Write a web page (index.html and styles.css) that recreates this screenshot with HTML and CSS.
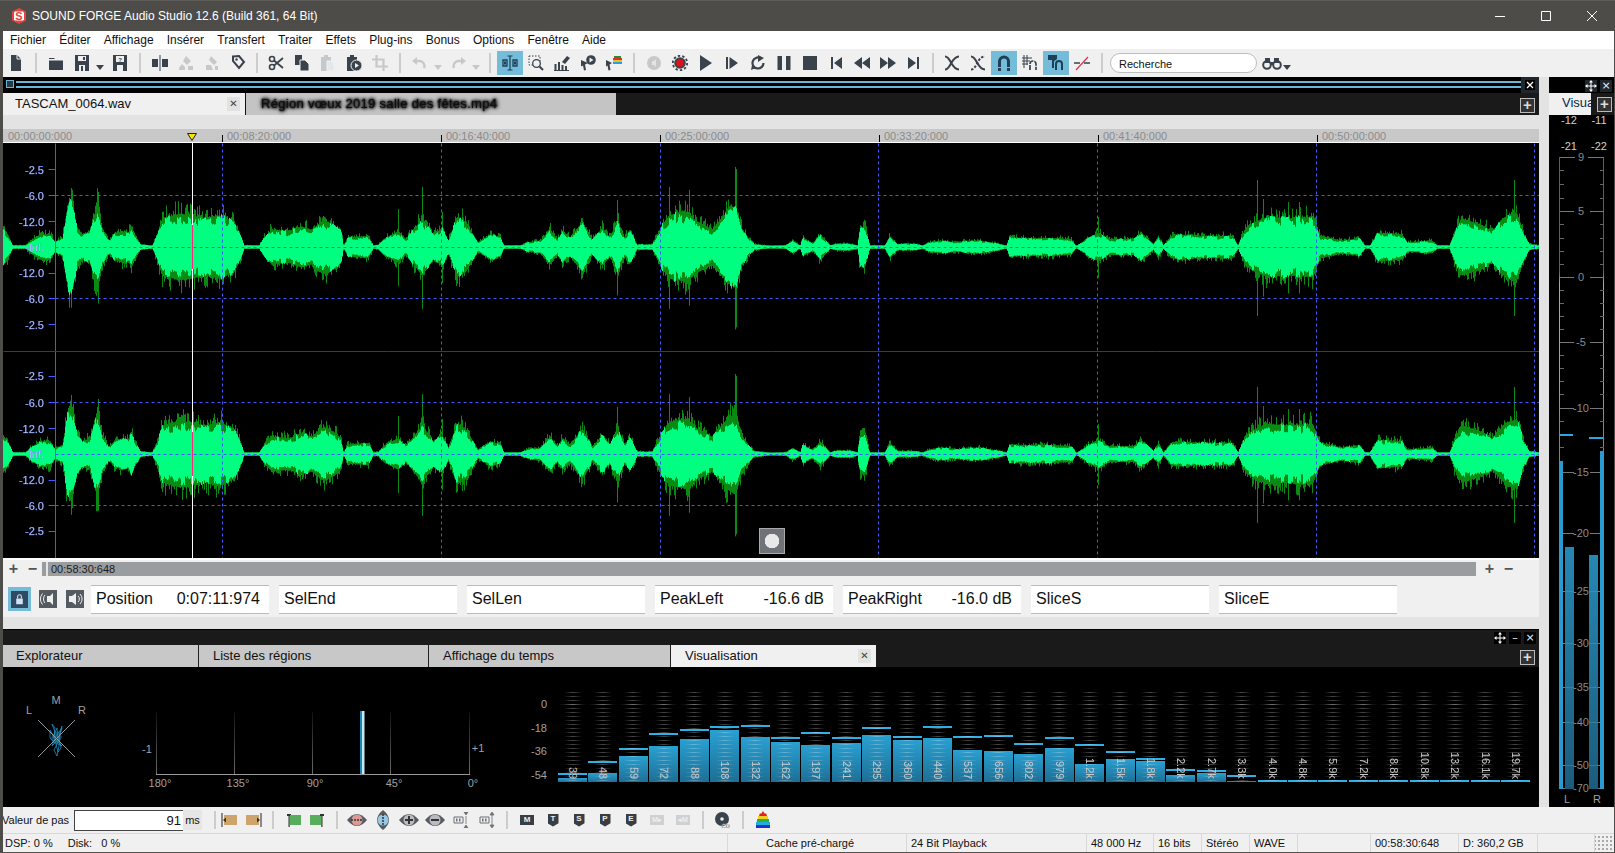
FILE: index.html
```html
<!DOCTYPE html>
<html lang="fr">
<head>
<meta charset="utf-8">
<title>SOUND FORGE Audio Studio 12.6</title>
<link rel="stylesheet" href="styles.css">
</head>
<body>
<svg class="sprite" xmlns="http://www.w3.org/2000/svg">
  <symbol id="new" viewBox="0 0 16 16"><path d="M3 0h6l4 4v12H3z" fill="currentColor"/><path d="M9 0v4h4" fill="none" stroke="#f0f0f0"/></symbol>
  <symbol id="open" viewBox="0 0 16 16"><path d="M1 3h5l1 1H1zM1 5.500h14V15H1z" fill="currentColor"/></symbol>
  <symbol id="save" viewBox="0 0 16 16"><path fill-rule="evenodd" d="M1 0h14v16H1zM4 1v5h8V1zM5 10v6h6v-6z" fill="currentColor"/><path d="M9 2h2v3H9zM7 11h2v5H7z" fill="currentColor"/></symbol>
  <symbol id="saveas" viewBox="0 0 16 16"><path fill-rule="evenodd" d="M1 0h14v16H1zM4 1v6h8V1zM5 10v6h6v-6z" fill="currentColor"/><text x="8" y="6.500" class="t6" text-anchor="middle" fill="currentColor">?</text></symbol>
  <symbol id="split" viewBox="0 0 16 16"><path d="M0 4h6v8H0zM10 4h6v8h-6z" fill="currentColor"/><path d="M8 0v16" stroke="currentColor"/></symbol>
  <symbol id="mixa" viewBox="0 0 16 16"><path d="M8 1l5 5-4 4-4-4zM1 13l3-4 3 3v3H1zM10 11h5v4h-5z" fill="currentColor"/></symbol>
  <symbol id="mixb" viewBox="0 0 16 16"><path d="M7 1l6 6-3 3-5-5zM2 10h5l2 5H2zM11 11h3v4h-3z" fill="currentColor"/></symbol>
  <symbol id="tag" viewBox="0 0 16 16"><path d="M3 1.500l6-.5 5 6-5 6-6-7z" fill="none" stroke="currentColor" stroke-width="2"/><circle cx="6.500" cy="4.500" r="1.200" fill="currentColor"/></symbol>
  <symbol id="cut" viewBox="0 0 16 16"><circle cx="4" cy="4" r="2.500" fill="none" stroke="currentColor" stroke-width="1.600"/><circle cx="4" cy="12" r="2.500" fill="none" stroke="currentColor" stroke-width="1.600"/><path d="M6 5.500L15 13M6 10.500L15 3" stroke="currentColor" stroke-width="1.800"/></symbol>
  <symbol id="copy" viewBox="0 0 16 16"><path d="M1 0h7v10H1z" fill="currentColor"/><path d="M6 5h5l4 4v7H6z" fill="currentColor" stroke="#f0f0f0"/></symbol>
  <symbol id="paste" viewBox="0 0 16 16"><path d="M1 2h10v14H1z" fill="currentColor"/><path d="M4 0h4v3H4z" fill="currentColor"/><path d="M7 6h4l3 3v7H7z" fill="#e6e7e8" stroke="#f0f0f0"/></symbol>
  <symbol id="pastep" viewBox="0 0 16 16"><path d="M1 2h10v14H1z" fill="currentColor"/><path d="M4 0h4v3H4z" fill="currentColor"/><circle cx="10.500" cy="10.500" r="5.500" fill="currentColor" stroke="#f0f0f0"/><path d="M9 8l4 2.500L9 13z" fill="#f0f0f0"/></symbol>
  <symbol id="crop" viewBox="0 0 16 16"><path d="M4.500 0v11.500H16M0 4.500h11.500V16" fill="none" stroke="currentColor" stroke-width="2.200"/></symbol>
  <symbol id="undo" viewBox="0 0 16 16"><path d="M0 6l5-4v8z" fill="currentColor"/><path d="M4 6h4a5 5 0 0 1 4 7" fill="none" stroke="currentColor" stroke-width="2.400"/></symbol>
  <symbol id="redo" viewBox="0 0 16 16"><path d="M16 6l-5-4v8z" fill="currentColor"/><path d="M12 6H8a5 5 0 0 0-4 7" fill="none" stroke="currentColor" stroke-width="2.400"/></symbol>
  <symbol id="ibeam" viewBox="0 0 16 16"><path d="M1 5h4v6H1zM11 5h4v6h-4z" fill="none" stroke="currentColor" stroke-width="1.300"/><path d="M8 1v14M5.500 1h5M5.500 15h5" stroke="currentColor" stroke-width="1.200"/><path d="M2 6.500h2v3H2zM12 6.500h2v3h-2z" fill="currentColor"/></symbol>
  <symbol id="zoomt" viewBox="0 0 16 16"><path d="M1 1h11v9H1z" fill="none" stroke="currentColor" stroke-dasharray="1.500 1.500"/><circle cx="8.500" cy="8.500" r="3.800" fill="#f0f0f0" stroke="currentColor" stroke-width="1.300"/><path d="M11.500 11.500l3.500 3.500" stroke="currentColor" stroke-width="2"/></symbol>
  <symbol id="pen" viewBox="0 0 16 16"><path d="M8 7l5-6 3 2-5 6z" fill="currentColor"/><path d="M1.500 9v6M5 7v8M8.500 10v5M12 11v4" stroke="currentColor" stroke-width="2"/><path d="M0 15.500h15" stroke="currentColor"/></symbol>
  <symbol id="curp" viewBox="0 0 16 16"><path d="M1 5l7 3-3 1.500 1 5.500-2 .5-1-5-2 1z" fill="currentColor"/><circle cx="11" cy="5" r="4.800" fill="currentColor"/><path d="M9.500 2.500l4 2.500-4 2.500z" fill="#f0f0f0"/></symbol>
  <symbol id="curc" viewBox="0 0 16 16"><path d="M0 5l6 3-2.500 1.500 1 5.500-2 .5-1-5-1.500 1z" fill="currentColor"/><path d="M7 3h9v2H7z" fill="#e52b2b"/><path d="M8 1h7v2H8z" fill="#2c8b3b"/><path d="M7 5h9v2H7z" fill="#f0c020"/><path d="M7 7h9v2H7z" fill="#28a0e0"/></symbol>
  <symbol id="circ" viewBox="0 0 16 16"><circle cx="8" cy="8" r="7" fill="currentColor"/><path d="M6 6h2l2-2v8l-2-2H6z" fill="#e4e4e4"/></symbol>
  <symbol id="rec" viewBox="0 0 16 16"><circle cx="8" cy="8" r="5.800" fill="currentColor"/><circle cx="8" cy="8" r="7.200" fill="none" stroke="currentColor" stroke-width="1.800" stroke-dasharray="2.400 2.100"/><circle cx="8" cy="8" r="3.800" fill="#e0101a"/></symbol>
  <symbol id="play" viewBox="0 0 16 16"><path d="M2 0l12 8-12 8z" fill="currentColor"/></symbol>
  <symbol id="playn" viewBox="0 0 16 16"><path d="M2 2h2v12H2zM5.500 2l8.500 6-8.500 6z" fill="currentColor"/></symbol>
  <symbol id="loop" viewBox="0 0 16 16"><path d="M13.500 8a5.500 5.500 0 1 1-3-4.900" fill="none" stroke="currentColor" stroke-width="2.200"/><path d="M8 0l6 3-6 4zM1 15l1-5 4 3z" fill="currentColor"/></symbol>
  <symbol id="pause" viewBox="0 0 16 16"><path d="M1.500 1h4.500v14H1.500zM10 1h4.500v14H10z" fill="currentColor"/></symbol>
  <symbol id="stop" viewBox="0 0 16 16"><path d="M1 1h14v14H1z" fill="currentColor"/></symbol>
  <symbol id="prev" viewBox="0 0 16 16"><path d="M3 2h2v12H3zM14 2v12L6 8z" fill="currentColor"/></symbol>
  <symbol id="rew" viewBox="0 0 16 16"><path d="M8 2v12L0 8zM16 2v12L8 8z" fill="currentColor"/></symbol>
  <symbol id="ffw" viewBox="0 0 16 16"><path d="M0 2v12l8-6zM8 2v12l8-6z" fill="currentColor"/></symbol>
  <symbol id="next" viewBox="0 0 16 16"><path d="M11 2h2v12h-2zM2 2v12l8-6z" fill="currentColor"/></symbol>
  <symbol id="xf" viewBox="0 0 16 16"><path d="M1 1.500c6 0 6 13 14 13M1 14.500c6 0 6-13 14-13" fill="none" stroke="currentColor" stroke-width="2"/></symbol>
  <symbol id="xf2" viewBox="0 0 16 16"><path d="M1 1.500c6 0 6 13 14 13" fill="none" stroke="currentColor" stroke-width="2"/><path d="M1 14.500c6 0 6-13 14-13" fill="none" stroke="currentColor" stroke-width="2" stroke-dasharray="2.500 1.500"/></symbol>
  <symbol id="mag" viewBox="0 0 16 16"><path d="M3.500 12V6.500a4.500 4.500 0 0 1 9 0V12" fill="none" stroke="currentColor" stroke-width="3"/><path d="M2 13h3v3H2zM11 13h3v3h-3z" fill="currentColor"/></symbol>
  <symbol id="gmag" viewBox="0 0 16 16"><path d="M2 0v13M5 0v10M0 3h10M0 6h8M0 9h6" stroke="currentColor"/><path d="M8 15V9a3 3 0 0 1 6 0v6" fill="none" stroke="currentColor" stroke-width="1.700" stroke-dasharray="5 1"/></symbol>
  <symbol id="mmag" viewBox="0 0 16 16"><path d="M0 0h9v4l-4 3-1-2H0zM4 5h2v8H4z" fill="currentColor"/><path d="M8 15V9a3 3 0 0 1 6 0v6" fill="none" stroke="currentColor" stroke-width="2"/></symbol>
  <symbol id="fade" viewBox="0 0 16 16"><path d="M0 8h6M10 8h6" stroke="currentColor" stroke-width="1.600"/><path d="M2 15L14 2" stroke="#d8344a" stroke-width="1.200"/></symbol>
  <symbol id="binoc" viewBox="0 0 20 16"><circle cx="5" cy="10" r="3.800" fill="none" stroke="currentColor" stroke-width="2"/><circle cx="15" cy="10" r="3.800" fill="none" stroke="currentColor" stroke-width="2"/><path d="M3 3h5v5H3zM12 3h5v5h-5zM8 7h4v3H8z" fill="currentColor"/></symbol>
  <symbol id="tapel" viewBox="0 0 16 16"><path d="M1 1v14" stroke="#222"/><path d="M3 3h13v10H3z" fill="#cfa46c"/><path d="M2 8l3-2.500v5z" fill="#333"/></symbol>
  <symbol id="taper" viewBox="0 0 16 16"><path d="M15 1v14" stroke="#222"/><path d="M0 3h13v10H0z" fill="#cfa46c"/><path d="M14 8l-3-2.500v5z" fill="#333"/></symbol>
  <symbol id="grl" viewBox="0 0 16 16"><path d="M2 2h4v2H2zM3.500 2h1.200v13H3.500z" fill="#333"/><path d="M5 3h11v10H5z" fill="#58ad5d"/></symbol>
  <symbol id="grr" viewBox="0 0 16 16"><path d="M0 3h11v10H0z" fill="#58ad5d"/><path d="M10 2h4v2h-4zM11.300 2h1.200v13h-1.200z" fill="#333"/></symbol>
  <symbol id="lensr" viewBox="0 0 20 16"><path d="M0 8Q10-4 20 8 10 20 0 8z" fill="#555b61"/><circle cx="10" cy="8" r="5.500" fill="#dc9a96"/><path d="M4 8h12" stroke="#333" stroke-width="1.500" stroke-dasharray="2 1"/></symbol>
  <symbol id="lensb" viewBox="0 0 16 20"><path d="M8 0Q-4 10 8 20 20 10 8 0z" fill="#555b61"/><circle cx="8" cy="10" r="5.500" fill="#96c8e4"/><path d="M8 4v12" stroke="#333" stroke-width="1.500" stroke-dasharray="2 1"/></symbol>
  <symbol id="lensp" viewBox="0 0 20 16"><path d="M0 8Q10-4 20 8 10 20 0 8z" fill="#555b61"/><circle cx="10" cy="8" r="5.500" fill="#b8bcc0"/><path d="M6 8h8M10 4v8" stroke="#333" stroke-width="2"/></symbol>
  <symbol id="lensm" viewBox="0 0 20 16"><path d="M0 8Q10-4 20 8 10 20 0 8z" fill="#555b61"/><circle cx="10" cy="8" r="5.500" fill="#b8bcc0"/><path d="M6 8h8" stroke="#333" stroke-width="2"/></symbol>
  <symbol id="fith" viewBox="0 0 16 16"><path d="M1 5h9v6H1z" fill="none" stroke="currentColor"/><path d="M3 6.500h1.500v3H3zM6 6.500h1.500v3H6z" fill="currentColor"/><path d="M11 0l4 0-2 3zM11 16h4l-2-3zM13 4v8" fill="currentColor" stroke="currentColor" stroke-width=".8"/></symbol>
  <symbol id="fitv" viewBox="0 0 16 16"><path d="M1 5h9v6H1z" fill="none" stroke="currentColor"/><path d="M3 6.500h1.500v3H3zM6 6.500h1.500v3H6z" fill="currentColor"/><path d="M13 0l2 3h-4zM13 16l2-3h-4zM13 3v10" fill="currentColor" stroke="currentColor" stroke-width=".8"/></symbol>
  <symbol id="cd" viewBox="0 0 16 16"><circle cx="7" cy="7" r="7" fill="currentColor"/><circle cx="7" cy="7" r="1.800" fill="#f0f0f0"/><text x="10.500" y="15.500" class="t7" text-anchor="middle" fill="currentColor" stroke="#f0f0f0" stroke-width=".3">CD</text></symbol>
  <symbol id="rain" viewBox="0 0 16 18"><path d="M1 17h14v-3H1z" fill="#2030d0"/><path d="M1 14h14v-3H1z" fill="#20b0e0"/><path d="M2 11h12V8H2z" fill="#30b030"/><path d="M3 8h10V5H3z" fill="#f0d020"/><path d="M4 5h8l-1-3-1 1-2-3-2 3-1-1z" fill="#e02020"/></symbol>
  <symbol id="down" viewBox="0 0 10 10"><path d="M1 3h8L5 8z" fill="currentColor"/></symbol>
  <symbol id="move" viewBox="0 0 12 12"><path d="M6 0l2 2.500H4zM6 12l2-2.500H4zM0 6l2.500-2v4zM12 6L9.500 4v4z" fill="#fff"/><path d="M6 2v8M2 6h8" stroke="#fff"/></symbol>
</svg>

<div class="app">
  <header class="titlebar">
    <svg class="logo" viewBox="0 0 16 16"><path d="M8 0l7 3.500v9L8 16l-7-3.500v-9z" fill="#e2453f"/><path d="M4 3.500h8l1 1v7l-1 1H4l-1-1v-7z" fill="#fff"/><text x="8" y="12" class="logot" text-anchor="middle">S</text></svg>
    <span class="apptitle">SOUND FORGE Audio Studio 12.6 (Build 361, 64 Bit)</span>
    <div class="winbtns">
      <svg viewBox="0 0 46 31"><path d="M18 15.500h10" stroke="#fff"/></svg>
      <svg viewBox="0 0 46 31"><path d="M18.500 10.500h9v9h-9z" fill="none" stroke="#fff"/></svg>
      <svg viewBox="0 0 46 31"><path d="M18 10l10 10M28 10L18 20" stroke="#fff"/></svg>
    </div>
  </header>

  <nav class="menubar">
    <span>Fichier</span><span>Éditer</span><span>Affichage</span><span>Insérer</span><span>Transfert</span><span>Traiter</span><span>Effets</span><span>Plug-ins</span><span>Bonus</span><span>Options</span><span>Fenêtre</span><span>Aide</span>
  </nav>

  <div class="toolbar">
    <span class="ti"><svg><use href="#new"/></svg></span><i class="sep"></i>
    <span class="ti"><svg><use href="#open"/></svg></span>
    <span class="ti"><svg><use href="#save"/></svg></span><span class="dd"><svg><use href="#down"/></svg></span>
    <span class="ti"><svg><use href="#saveas"/></svg></span><i class="sep"></i>
    <span class="ti"><svg><use href="#split"/></svg></span>
    <span class="ti off"><svg><use href="#mixa"/></svg></span>
    <span class="ti off"><svg><use href="#mixb"/></svg></span>
    <span class="ti"><svg><use href="#tag"/></svg></span><i class="sep nar"></i>
    <span class="ti"><svg><use href="#cut"/></svg></span>
    <span class="ti"><svg><use href="#copy"/></svg></span>
    <span class="ti off"><svg><use href="#paste"/></svg></span>
    <span class="ti"><svg><use href="#pastep"/></svg></span>
    <span class="ti off"><svg><use href="#crop"/></svg></span><i class="sep"></i>
    <span class="ti off"><svg><use href="#undo"/></svg></span><span class="dd off"><svg><use href="#down"/></svg></span>
    <span class="ti off"><svg><use href="#redo"/></svg></span><span class="dd off"><svg><use href="#down"/></svg></span><i class="sep"></i>
    <span class="ti on"><svg><use href="#ibeam"/></svg></span>
    <span class="ti"><svg><use href="#zoomt"/></svg></span>
    <span class="ti"><svg><use href="#pen"/></svg></span>
    <span class="ti"><svg><use href="#curp"/></svg></span>
    <span class="ti"><svg><use href="#curc"/></svg></span><i class="sep"></i>
    <span class="ti off"><svg><use href="#circ"/></svg></span>
    <span class="ti"><svg><use href="#rec"/></svg></span>
    <span class="ti"><svg><use href="#play"/></svg></span>
    <span class="ti"><svg><use href="#playn"/></svg></span>
    <span class="ti"><svg><use href="#loop"/></svg></span>
    <span class="ti"><svg><use href="#pause"/></svg></span>
    <span class="ti"><svg><use href="#stop"/></svg></span>
    <span class="ti"><svg><use href="#prev"/></svg></span>
    <span class="ti"><svg><use href="#rew"/></svg></span>
    <span class="ti"><svg><use href="#ffw"/></svg></span>
    <span class="ti"><svg><use href="#next"/></svg></span><i class="sep nar"></i>
    <span class="ti"><svg><use href="#xf"/></svg></span>
    <span class="ti"><svg><use href="#xf2"/></svg></span>
    <span class="ti on"><svg><use href="#mag"/></svg></span>
    <span class="ti"><svg><use href="#gmag"/></svg></span>
    <span class="ti on"><svg><use href="#mmag"/></svg></span>
    <span class="ti"><svg><use href="#fade"/></svg></span><i class="sep"></i>
    <div class="search">Recherche</div>
    <span class="binoc"><svg><use href="#binoc"/></svg></span><span class="dd"><svg><use href="#down"/></svg></span>
  </div>

  <div class="work">
    <main class="main">
      <div class="dockhead">
        <i class="grip"></i><i class="lines"></i>
        <span class="dockx"><svg viewBox="0 0 10 10"><path d="M2 2l6 6M8 2L2 8" stroke="#fff" stroke-width="1.300"/></svg></span>
      </div>
      <div class="doctabs">
        <div class="doctab cur"><span>TASCAM_0064.wav</span><b class="x">✕</b></div>
        <div class="doctab other"><span class="blur">Région vœux 2019 salle des fêtes.mp4</span></div>
        <span class="plusbtn">+</span>
      </div>
      <div class="greyband"></div>
      <div class="ruler">
        <span class="seg first">00:00:00:000</span><span class="seg">00:08:20:000</span><span class="seg">00:16:40:000</span><span class="seg">00:25:00:000</span><span class="seg">00:33:20:000</span><span class="seg">00:41:40:000</span><span class="seg">00:50:00:000</span>
        <svg class="playhead" viewBox="0 0 10 8"><path d="M.5.5h9L5 7.500z" fill="#f5e400" stroke="#222"/></svg>
      </div>
      <div class="wave">
        <canvas id="wave" width="1536" height="415"></canvas>
        <svg class="wavelabels" viewBox="3 143 60 415">
          <text x="44" y="174">-2.5</text><text x="44" y="200">-6.0</text><text x="44" y="226">-12.0</text><text x="44" y="251">-Inf.</text><text x="44" y="277">-12.0</text><text x="44" y="303">-6.0</text><text x="44" y="329">-2.5</text>
          <text x="44" y="380">-2.5</text><text x="44" y="407">-6.0</text><text x="44" y="433">-12.0</text><text x="44" y="458">-Inf.</text><text x="44" y="484">-12.0</text><text x="44" y="510">-6.0</text><text x="44" y="535">-2.5</text>
        </svg>
        <span class="recdot"></span>
      </div>
      <div class="scrollrow">
        <span class="pm">+</span><span class="pm">−</span>
        <div class="scrollbar"><i class="nub"></i>00:58:30:648</div>
        <span class="pm right">+</span><span class="pm">−</span>
      </div>
      <div class="fields">
        <span class="lock"><svg viewBox="0 0 18 18"><path d="M0 0h18v18H0z" fill="#2f4a63"/><path d="M5.500 8h7v6h-7z" fill="#cfe4f0"/><path d="M7 8V6a2 2 0 0 1 4 0v2" fill="none" stroke="#cfe4f0" stroke-width="1.200"/></svg></span>
        <span class="fico"><svg viewBox="0 0 18 18"><path d="M0 0h18v18H0z" fill="#555b61"/><path d="M8 6h3l3-3v12l-3-3H8z" fill="#eee"/><path d="M6 5a6 6 0 0 0 0 8M3.500 3.500a9 9 0 0 0 0 11" fill="none" stroke="#eee"/></svg></span>
        <span class="fico"><svg viewBox="0 0 18 18"><path d="M0 0h18v18H0z" fill="#555b61"/><path d="M3 6h3l4-3v12l-4-3H3z" fill="#eee"/><path d="M12 6a4 4 0 0 1 0 6M14 4a7 7 0 0 1 0 10" fill="none" stroke="#eee"/></svg></span>
        <div class="field"><span>Position</span><span>0:07:11:974</span></div>
        <div class="field"><span>SelEnd</span></div>
        <div class="field"><span>SelLen</span></div>
        <div class="field"><span>PeakLeft</span><span>-16.6 dB</span></div>
        <div class="field"><span>PeakRight</span><span>-16.0 dB</span></div>
        <div class="field"><span>SliceS</span></div>
        <div class="field"><span>SliceE</span></div>
      </div>
      <div class="greyband low"></div>
      <div class="dockhead2">
        <span class="ctl"><svg><use href="#move"/></svg></span><span class="ctl">–</span><span class="ctl">×</span>
      </div>
      <div class="lowtabs">
        <div class="lowtab a">Explorateur</div>
        <div class="lowtab b">Liste des régions</div>
        <div class="lowtab c">Affichage du temps</div>
        <div class="lowtab d cur">Visualisation<b class="x">✕</b></div>
        <span class="plusbtn">+</span>
      </div>
      <div class="viz">
        <svg class="scope" viewBox="3 667 555 140">
          <defs><linearGradient id="tickg" gradientUnits="userSpaceOnUse" x1="0" y1="712" x2="0" y2="774"><stop offset="0" stop-color="#111"/><stop offset="1" stop-color="#6a6a6a"/></linearGradient></defs>
          <g class="sc"><text x="29" y="714" text-anchor="middle">L</text><text x="56" y="704" text-anchor="middle">M</text><text x="82" y="714" text-anchor="middle">R</text></g>
          <path d="M52 724l3 8-2 6 4-10 1 14-4 8 3 6 2-10 1-14 2-6-3 12 2 10-3 4-2-8-2-8 1-8zM50 730l6 10 6 6-8-4-4-4zM62 728l-4 12-6 6 4-10z" fill="none" stroke="#1f8fc2" stroke-width=".8"/>
          <path d="M52 735l6-4 4 6-3 6-6 0-2-4z" fill="#1d7aa6" opacity=".6"/>
          <path d="M38 720L75 757M75 720L38 757" stroke="#8f9aa0"/>
          <path d="M156.500 712v62M234.500 712v62M312.500 712v62M390.500 712v62M469.500 712v62" stroke="url(#tickg)"/>
          <path d="M156 774.500h314" stroke="#999"/>
          <rect x="360" y="711" width="2" height="63" fill="#1f86b3"/><rect x="362" y="711" width="2.500" height="63" fill="#c4e9f7"/>
          <g class="sc"><text x="147" y="753" text-anchor="middle">-1</text><text x="478" y="752" text-anchor="middle">+1</text>
          <text x="160" y="787" text-anchor="middle">180°</text><text x="238" y="787" text-anchor="middle">135°</text><text x="315" y="787" text-anchor="middle">90°</text><text x="394" y="787" text-anchor="middle">45°</text><text x="473" y="787" text-anchor="middle">0°</text>
          <text x="547" y="708" text-anchor="end">0</text><text x="547" y="732" text-anchor="end">-18</text><text x="547" y="755" text-anchor="end">-36</text><text x="547" y="779" text-anchor="end">-54</text></g>
        </svg>
        <div class="spectrum">
          <div class="band" style="--h:4px;--p:7px"><i class="fill"></i><i class="peak"></i><span>39</span></div>
          <div class="band" style="--h:9px;--p:19px"><i class="fill"></i><i class="peak"></i><span>48</span></div>
          <div class="band" style="--h:26px;--p:32px"><i class="fill"></i><i class="peak"></i><span>59</span></div>
          <div class="band" style="--h:36px;--p:47px"><i class="fill"></i><i class="peak"></i><span>72</span></div>
          <div class="band" style="--h:43px;--p:51px"><i class="fill"></i><i class="peak"></i><span>88</span></div>
          <div class="band" style="--h:52px;--p:54px"><i class="fill"></i><i class="peak"></i><span>108</span></div>
          <div class="band" style="--h:45px;--p:55px"><i class="fill"></i><i class="peak"></i><span>132</span></div>
          <div class="band" style="--h:40px;--p:43px"><i class="fill"></i><i class="peak"></i><span>162</span></div>
          <div class="band" style="--h:37px;--p:48px"><i class="fill"></i><i class="peak"></i><span>197</span></div>
          <div class="band" style="--h:39px;--p:43px"><i class="fill"></i><i class="peak"></i><span>241</span></div>
          <div class="band" style="--h:47px;--p:53px"><i class="fill"></i><i class="peak"></i><span>295</span></div>
          <div class="band" style="--h:42px;--p:44px"><i class="fill"></i><i class="peak"></i><span>360</span></div>
          <div class="band" style="--h:44px;--p:54px"><i class="fill"></i><i class="peak"></i><span>440</span></div>
          <div class="band" style="--h:32px;--p:44px"><i class="fill"></i><i class="peak"></i><span>537</span></div>
          <div class="band" style="--h:31px;--p:45px"><i class="fill"></i><i class="peak"></i><span>656</span></div>
          <div class="band" style="--h:28px;--p:37px"><i class="fill"></i><i class="peak"></i><span>802</span></div>
          <div class="band" style="--h:34px;--p:43px"><i class="fill"></i><i class="peak"></i><span>979</span></div>
          <div class="band" style="--h:18px;--p:36px"><i class="fill"></i><i class="peak"></i><span>1.2k</span></div>
          <div class="band" style="--h:23px;--p:29px"><i class="fill"></i><i class="peak"></i><span>1.5k</span></div>
          <div class="band" style="--h:21px;--p:22px"><i class="fill"></i><i class="peak"></i><span>1.8k</span></div>
          <div class="band" style="--h:7px;--p:11px"><i class="fill"></i><i class="peak"></i><span>2.2k</span></div>
          <div class="band" style="--h:9px;--p:10px"><i class="fill"></i><i class="peak"></i><span>2.7k</span></div>
          <div class="band" style="--h:1px;--p:5px"><i class="fill"></i><i class="peak"></i><span>3.3k</span></div>
          <div class="band" style="--h:0px;--p:0px"><i class="fill"></i><i class="peak"></i><span>4.0k</span></div>
          <div class="band" style="--h:0px;--p:0px"><i class="fill"></i><i class="peak"></i><span>4.8k</span></div>
          <div class="band" style="--h:0px;--p:0px"><i class="fill"></i><i class="peak"></i><span>5.9k</span></div>
          <div class="band" style="--h:0px;--p:0px"><i class="fill"></i><i class="peak"></i><span>7.2k</span></div>
          <div class="band" style="--h:0px;--p:0px"><i class="fill"></i><i class="peak"></i><span>8.8k</span></div>
          <div class="band" style="--h:0px;--p:0px"><i class="fill"></i><i class="peak"></i><span>10.8k</span></div>
          <div class="band" style="--h:0px;--p:0px"><i class="fill"></i><i class="peak"></i><span>13.2k</span></div>
          <div class="band" style="--h:0px;--p:0px"><i class="fill"></i><i class="peak"></i><span>16.1k</span></div>
          <div class="band" style="--h:0px;--p:0px"><i class="fill"></i><i class="peak"></i><span>19.7k</span></div>
        </div>
      </div>
    </main>

    <div class="gutter"></div>

    <aside class="side">
      <div class="sidehead"><span class="ctl"><svg><use href="#move"/></svg></span><span class="ctl">×</span></div>
      <div class="sidetabs"><div class="sidetab">Visualisation</div><span class="plusbtn">+</span></div>
      <svg class="meter" viewBox="1549 115 65 692">
        <defs>
          <linearGradient id="frame" gradientUnits="userSpaceOnUse" x1="0" y1="157" x2="0" y2="789">
            <stop offset="0" stop-color="#d8234f"/><stop offset=".18" stop-color="#d8234f"/><stop offset=".2" stop-color="#c9b02f"/><stop offset=".36" stop-color="#a8a850"/><stop offset=".42" stop-color="#4b9f9f"/><stop offset=".5" stop-color="#2a9bd0"/><stop offset="1" stop-color="#2a9bd0"/>
          </linearGradient>
          <linearGradient id="bar" x1="0" y1="0" x2="0" y2="1"><stop offset="0" stop-color="#2587b3"/><stop offset="1" stop-color="#1b5c7c"/></linearGradient>
        </defs>
        <g class="sc lt"><text x="1569" y="124" text-anchor="middle">-12</text><text x="1599" y="124" text-anchor="middle">-11</text><text x="1569" y="150" text-anchor="middle">-21</text><text x="1599" y="150" text-anchor="middle">-22</text></g>
        <path d="M1559.500 157v632M1603.500 157v632" stroke="url(#frame)" fill="none"/>
        <path d="M1560 157.500h15M1588 157.500h16M1560 211.500h14M1590 211.500h14M1560 277.500h14M1590 277.500h14M1560 342.500h14M1590 342.500h14M1560 408.500h14M1590 408.500h14M1560 472.500h14M1590 472.500h14M1560 533.500h14M1590 533.500h14M1560 591.500h14M1590 591.500h14M1560 643.500h14M1590 643.500h14M1560 687.500h14M1590 687.500h14M1560 722.500h14M1590 722.500h14M1560 765.500h14M1590 765.500h14M1560 788.500h14M1590 788.500h14" stroke="#777" fill="none"/>
        <path d="M1560 170.500h4M1600 170.500h4M1560 184.500h4M1600 184.500h4M1560 198.500h4M1600 198.500h4M1560 224.500h4M1600 224.500h4M1560 238.500h4M1600 238.500h4M1560 251.500h4M1600 251.500h4M1560 264.500h4M1600 264.500h4M1560 290.500h4M1600 290.500h4M1560 303.500h4M1600 303.500h4M1560 316.500h4M1600 316.500h4M1560 329.500h4M1600 329.500h4M1560 355.500h4M1600 355.500h4M1560 368.500h4M1600 368.500h4M1560 381.500h4M1600 381.500h4M1560 394.500h4M1600 394.500h4M1560 421.500h4M1600 421.500h4M1560 447.500h4M1600 447.500h4" stroke="#666" fill="none"/>
        <rect x="1559" y="461" width="4" height="328" fill="#2a9bd0"/><rect x="1600" y="451" width="4" height="338" fill="#2a9bd0"/>
        <rect x="1565" y="547" width="9" height="242" fill="url(#bar)"/><rect x="1589" y="555" width="9" height="234" fill="url(#bar)"/>
        <rect x="1560" y="434" width="13" height="2" fill="#2ea6dd"/><rect x="1589" y="437" width="14" height="2" fill="#2ea6dd"/>
        <path d="M1565 591.500h9M1589 591.500h9M1565 643.500h9M1589 643.500h9M1565 687.500h9M1589 687.500h9M1565 722.500h9M1589 722.500h9M1565 765.500h9M1589 765.500h9" stroke="#6aa" opacity=".35"/>
        <g class="sc gy"><text x="1581" y="161" text-anchor="middle">9</text><text x="1581" y="215" text-anchor="middle">5</text><text x="1581" y="281" text-anchor="middle">0</text><text x="1581" y="346" text-anchor="middle">-5</text><text x="1581" y="412" text-anchor="middle">-10</text><text x="1581" y="476" text-anchor="middle">-15</text><text x="1581" y="537" text-anchor="middle">-20</text><text x="1581" y="595" text-anchor="middle">-25</text><text x="1581" y="647" text-anchor="middle">-30</text><text x="1581" y="691" text-anchor="middle">-35</text><text x="1581" y="726" text-anchor="middle">-40</text><text x="1581" y="769" text-anchor="middle">-50</text><text x="1581" y="792" text-anchor="middle">-70</text></g>
        <g class="sc"><text x="1567" y="803" text-anchor="middle">L</text><text x="1597" y="803" text-anchor="middle">R</text></g>
      </svg>
    </aside>
  </div>

  <div class="bottombar">
    <span class="steplabel">Valeur de pas</span>
    <div class="stepinput">91</div>
    <span class="ms">ms</span>
    <i class="bsep first"></i>
    <span class="bi n"><svg><use href="#tapel"/></svg></span>
    <span class="bi n"><svg><use href="#taper"/></svg></span><i class="bsep"></i>
    <span class="bi n"><svg><use href="#grl"/></svg></span>
    <span class="bi n"><svg><use href="#grr"/></svg></span><i class="bsep"></i>
    <span class="bi"><svg class="w20"><use href="#lensr"/></svg></span>
    <span class="bi"><svg class="h20"><use href="#lensb"/></svg></span>
    <span class="bi"><svg class="w20"><use href="#lensp"/></svg></span>
    <span class="bi"><svg class="w20"><use href="#lensm"/></svg></span>
    <span class="bi g"><svg><use href="#fith"/></svg></span>
    <span class="bi g"><svg><use href="#fitv"/></svg></span><i class="bsep"></i>
    <span class="bi"><b class="mk sq">M</b></span>
    <span class="bi"><b class="mk sh">T</b></span>
    <span class="bi"><b class="mk sh">S</b></span>
    <span class="bi"><b class="mk sh">P</b></span>
    <span class="bi"><b class="mk sh">E</b></span>
    <span class="bi"><b class="mk sq dim">M▸</b></span>
    <span class="bi"><b class="mk sq dim">◂M</b></span><i class="bsep"></i>
    <span class="bi"><svg><use href="#cd"/></svg></span><i class="bsep"></i>
    <span class="bi"><svg class="h18"><use href="#rain"/></svg></span>
  </div>

  <footer class="statusbar">
    <div><span class="dsp">DSP: 0 %</span><span>Disk:&nbsp;&nbsp; 0 %</span></div>
    <div class="cache">Cache pré-chargé</div>
    <div>24 Bit Playback</div>
    <div>48 000 Hz</div>
    <div>16 bits</div>
    <div>Stéréo</div>
    <div>WAVE</div>
    <div></div>
    <div>00:58:30:648</div>
    <div>D: 360,2 GB</div>
    <div></div>
    <div class="resize"></div>
  </footer>
</div>
<script src="script.js"></script>
</body>
</html>
```
FILE: styles.css
```css
* { box-sizing: border-box; }
html, body { margin: 0; padding: 0; height: 100%; overflow: hidden; }
body { font-family: "Liberation Sans", Arial, sans-serif; background: #4d4c49; color: #111; }
.sprite { display: none; }
i, b { font-style: normal; }
svg { display: block; }

.app { width: 1615px; height: 853px; display: flex; flex-direction: column; border-left: 3px solid #4d4c49; border-right: 1px solid #4d4c49; border-bottom: 1px solid #55544f; }

.titlebar { height: 31px; flex: none; display: flex; align-items: center; background: #4d4c49; margin-left: -3px; margin-right: -1px; border-top: 1px solid #5d5c58; color: #fff; }
.logo { width: 16px; height: 16px; margin-left: 11px; }
.logot { font: bold 11px "Liberation Sans", sans-serif; fill: #e2453f; }
.apptitle { margin-left: 5px; font-size: 12px; }
.winbtns { margin-left: auto; display: flex; }
.winbtns svg { width: 46px; height: 31px; }

.menubar { height: 18px; flex: none; background: #fff; display: flex; align-items: center; font-size: 12px; padding-left: 7px; }
.menubar span { margin-right: 13.2px; white-space: nowrap; }

.toolbar { height: 28px; flex: none; background: #f0f0f0; display: flex; align-items: center; color: #3a424b; }
.ti { width: 26px; height: 24px; flex: none; display: flex; align-items: center; justify-content: center; color: #3a424b; }
.ti svg { width: 16px; height: 16px; }
.ti.off, .dd.off { color: #c6c9cb; }
.ti.on { background: #74bcd8; color: #1d3f58; }
.dd { width: 12px; flex: none; color: #3a424b; padding-top: 8px; }
.dd svg { width: 10px; height: 10px; }
.sep { width: 14px; height: 20px; flex: none; background: linear-gradient(#ccc, #ccc) center / 2px 100% no-repeat; }
.sep.nar { width: 12px; }
.search { width: 147px; height: 20px; flex: none; margin-left: 1px; background: #fff; border: 1px solid #bdbdbd; border-radius: 10px; font-size: 11px; line-height: 20px; padding-left: 8px; color: #111; }
.binoc { margin-left: 5px; width: 20px; color: #3a424b; }
.binoc svg { width: 20px; height: 16px; }

.work { height: 730px; flex: none; display: flex; }
.main { width: 1536px; flex: none; display: flex; flex-direction: column; }
.gutter { width: 10px; flex: none; background: #e3e3e3; }
.side { width: 65px; flex: none; background: #000; display: flex; flex-direction: column; }

.dockhead { height: 16px; flex: none; display: flex; align-items: flex-start; background: #000; padding-top: 3px; }
.grip { width: 8px; height: 8px; margin-left: 3px; border: 1px solid #6bb6d8; background: #2c3a44; flex: none; }
.lines { width: 1505px; margin-left: 2px; height: 7px; flex: none; margin-top: 1px; border-top: 2px solid #6bb6d8; border-bottom: 2px solid #6bb6d8; }
.dockx { width: 18px; height: 16px; margin-top: -3px; background: #20262b; flex: none; display: flex; align-items: center; justify-content: center; }
.dockx svg { width: 10px; height: 10px; background: #000; }

.doctabs { height: 22px; flex: none; background: #1a1a1a; display: flex; align-items: stretch; }
.doctab { font-size: 13px; display: flex; align-items: center; flex: none; position: relative; padding-bottom: 2px; }
.doctab.cur { width: 243px; background: #f0f0f0; padding-left: 12px; border-right: 1px solid #111; }
.doctab.other { width: 370px; background: #c4c4c4; padding-left: 15px; }
.blur { font-size: 13px; letter-spacing: .3px; color: #111; filter: blur(.7px); text-shadow: 0 0 3px #000, 0 0 2px #000, 1px 0 4px #000, 0 0 5px #000; white-space: nowrap; }
.x { position: absolute; right: 5px; top: 4px; width: 13px; height: 14px; font: bold 10px/14px "DejaVu Sans", sans-serif; text-align: center; background: #e2e2e2; color: #444; }
.plusbtn { margin-left: auto; margin-right: 4px; margin-top: 5px; width: 15px; height: 15px; flex: none; border: 1px solid #bbb; color: #ddd; font: bold 15px/12px "Liberation Sans", sans-serif; text-align: center; background: #333; }

.greyband { height: 14px; flex: none; background: #e3e3e3; }
.greyband.low { height: 12px; }

.ruler { height: 14px; flex: none; background: #c8c8c8; display: flex; position: relative; border-bottom: 1px solid #fff; font-size: 11px; color: #8b8b8b; line-height: 14px; }
.seg { width: 219px; flex: none; padding-left: 5px; height: 13px; background: linear-gradient(#000, #000) 0 100% / 1px 7px no-repeat #c8c8c8; white-space: nowrap; }
.seg:last-of-type { width: 218px; }
.seg.first { background: #c8c8c8; }
.playhead { position: absolute; left: 184px; top: 4px; width: 10px; height: 8px; }

.wave { height: 415px; flex: none; position: relative; background: #000; }
#wave { display: block; width: 1536px; height: 415px; }
.wavelabels { position: absolute; left: 0; top: 0; width: 60px; height: 415px; }
.wavelabels text { font: 11px "Liberation Sans", sans-serif; text-anchor: end; fill: #d8e4ff; stroke: #3c5cff; stroke-width: .25; }
.recdot { position: absolute; left: 756px; top: 385px; width: 26px; height: 26px; border: 1px solid #aaa; background: radial-gradient(circle, #e8e8e8 0 7px, #6f7377 7.5px); }

.scrollrow { height: 20px; flex: none; background: #f0f0f0; border-top: 2px solid #fff; display: flex; align-items: center; }
.pm { width: 19px; flex: none; text-align: center; font: bold 16px/14px "Liberation Sans", sans-serif; color: #555; }
.pm:first-child { margin-left: 1px; }
.scrollbar { width: 1434px; height: 14px; flex: none; background: #9a9d9f; font-size: 11px; line-height: 14px; color: #1c1c1c; display: flex; align-items: center; white-space: nowrap; }
.nub { width: 6px; height: 14px; margin-right: 3px; background: linear-gradient(90deg, #9a9d9f 0 4px, #e5e5e5 4px); }
.pm.right { margin-left: 4px; }

.fields { height: 39px; flex: none; background: #f0f0f0; display: flex; align-items: center; padding: 3px 0 0 5px; font-size: 16px; }
.lock { width: 23px; height: 24px; flex: none; background: #74bcd8; display: flex; align-items: center; justify-content: center; }
.lock svg { width: 17px; height: 17px; }
.fico { width: 18px; height: 18px; flex: none; margin-left: 8px; }
.fico svg { width: 18px; height: 18px; }
.fico + .fico { margin-left: 9px; }
.field { width: 178px; height: 29px; flex: none; background: #fff; border-top: 1px solid #bbb; border-bottom: 1px solid #bbb; display: flex; justify-content: space-between; align-items: center; padding: 0 9px 0 5px; margin-right: 10px; white-space: nowrap; }
.fico + .field { margin-left: 7px; }

.dockhead2 { height: 16px; flex: none; background: #1a1a1a; border-top: 1px solid #000; display: flex; justify-content: flex-end; align-items: center; gap: 3px; padding-right: 3px; }
.ctl { width: 12px; height: 12px; background: #000; color: #eee; font: 11px/12px "DejaVu Sans", sans-serif; text-align: center; }
.ctl svg { width: 12px; height: 12px; }

.lowtabs { height: 22px; flex: none; background: #1a1a1a; display: flex; align-items: stretch; }
.lowtab { flex: none; background: #c8c8c8; font-size: 13px; line-height: 21px; padding-left: 13px; border-right: 1px solid #222; position: relative; }
.lowtab.a { width: 196px; }
.lowtab.b { width: 230px; padding-left: 14px; }
.lowtab.c { width: 242px; padding-left: 14px; }
.lowtab.d { width: 205px; padding-left: 14px; }
.lowtab.cur { background: #f0f0f0; border-right: 0; }
.lowtabs .plusbtn { margin-top: 5px; margin-bottom: 2px; }

.viz { height: 140px; flex: none; background: #000; display: flex; }
.scope { width: 555px; height: 140px; flex: none; }
.sc text { font: 11px "Liberation Sans", sans-serif; fill: #a0a0a0; }
.sc.lt text { fill: #d0d0d0; }
.sc.gy text { fill: #8a8a8a; }

.spectrum { width: 972px; height: 90px; margin-top: 25px; flex: none; display: grid; grid-template-columns: repeat(32, 1fr); column-gap: 1.4px; }
.band { position: relative; height: 90px; background: linear-gradient(90deg, transparent, #3a3a3a 50%, transparent) 0 12px / 100% 1px no-repeat; }
.fill { position: absolute; left: 0; right: 0; bottom: 0; height: var(--h); background: linear-gradient(#29a0d2, #1d6f95); }
.peak { position: absolute; left: 0; right: 0; bottom: var(--p); height: 2px; background: #2bb0e8; }
.band::after { content: ""; position: absolute; left: 50%; top: 0; width: 18px; margin-left: -9px; height: 92px; background: repeating-linear-gradient(rgba(255,255,255,.28) 0 1px, transparent 1px 4px); -webkit-mask-image: linear-gradient(90deg, transparent, #000 50%, transparent); mask-image: linear-gradient(90deg, transparent, #000 50%, transparent); }
.band span { position: absolute; left: 50%; bottom: 3px; transform: translateX(-50%); writing-mode: vertical-rl; font-size: 11px; line-height: 11px; color: #c8c8c8; z-index: 1; white-space: nowrap; }

.sidehead { height: 16px; flex: none; display: flex; justify-content: flex-end; gap: 3px; padding: 3px 2px 0 0; }
.sidehead .ctl { background: #20262b; }
.sidetabs { height: 22px; flex: none; display: flex; background: #1a1a1a; }
.sidetab { width: 42px; background: #f0f0f0; font-size: 13px; line-height: 20px; padding-left: 13px; color: #0d2a4a; overflow: hidden; white-space: nowrap; flex: none; }
.sidetabs .plusbtn { margin-left: 6px; margin-right: 0; margin-top: 4px; }
.meter { width: 65px; height: 692px; flex: none; }

.bottombar { height: 26px; flex: none; background: #f0f0f0; display: flex; align-items: center; font-size: 11px; }
.steplabel { width: 71px; flex: none; text-indent: -1px; white-space: nowrap; overflow: hidden; }
.stepinput { width: 109px; height: 21px; flex: none; background: #fff; border: 1px solid #444; border-right: 0; font-size: 13px; line-height: 20px; text-align: right; padding-right: 2px; }
.ms { width: 19px; height: 20px; flex: none; background: #e6e6e6; line-height: 20px; text-align: center; }
.bsep { width: 14px; height: 18px; flex: none; background: linear-gradient(#ccc, #ccc) center / 2px 100% no-repeat; }
.bsep.first { margin: 0 -6px 0 6px; }
.bi { width: 26px; height: 22px; flex: none; display: flex; align-items: center; justify-content: center; color: #3a424b; }
.bi.n { width: 25px; }
.bi.g { color: #6b7177; }
.bi svg { width: 16px; height: 16px; }
.bi svg.w20 { width: 20px; height: 16px; }
.bi svg.h20 { width: 16px; height: 20px; }
.bi svg.h18 { width: 16px; height: 18px; }
.t6 { font: bold 6px "Liberation Sans", sans-serif; }
.t7 { font: bold 6px "Liberation Sans", sans-serif; }
.mk { display: block; font: bold 8px/10px "Liberation Sans", sans-serif; color: #eee; background: #3a3d41; text-align: center; }
.mk.sq { width: 14px; height: 10px; }
.mk.sh { width: 11px; height: 13px; line-height: 10px; clip-path: polygon(0 0, 100% 0, 100% 75%, 50% 100%, 0 75%); }
.mk.dim { background: #cfd0d1; font-size: 7px; }

.statusbar { height: 19px; flex: none; background: #f0f0f0; border-top: 1px solid #d8d8d8; display: grid; grid-template-columns: 724px 179px 180px 67px 48px 48px 48px 73px 88px 79px 57px 20px; font-size: 11px; line-height: 18px; }
.statusbar > div { border-left: 1px solid #d8d8d8; padding-left: 4px; white-space: nowrap; overflow: hidden; }
.statusbar > div:first-child { border-left: 0; padding-left: 2px; }
.dsp { margin-right: 15px; }
.statusbar .cache { padding-left: 38px; }
.resize { background: radial-gradient(circle, #aaa 1px, transparent 1.2px) 6px 5px / 4px 4px; }
```
FILE: script.js
```js
(function () {
  var cv = document.getElementById('wave');
  var g = cv.getContext('2d');
  var OX = 3, OY = 143;

  var a = [[5,60],[15,40],[25,5],[50,5],[60,20],[80,40],[100,40],[110,15],[125,30],[135,130],[142,150],[155,60],[165,40],[180,50],[195,140],[205,60],[218,20],[228,40],[245,50],[258,45],[262,70],[272,35],[282,8],[305,5],[315,40],[325,90],[360,105],[385,100],[410,90],[440,100],[470,80],[485,30],[490,5],[520,5],[530,30],[545,55],[580,50],[605,65],[625,55],[650,85],[670,70],[685,50],[690,5],[698,30],[740,35],[750,5],[760,8],[770,25],[800,50],[815,25],[848,90],[870,40],[888,60],[900,20],[918,95],[935,80],[960,15],[985,40],[1005,30],[1012,5],[1045,5],[1060,15],[1085,20],[1105,55],[1120,25],[1130,50],[1145,30],[1170,80],[1190,25],[1210,60],[1225,30],[1240,85],[1255,30],[1265,55],[1280,8],[1310,8],[1330,70],[1345,100],[1380,110],[1400,80],[1415,70],[1430,55],[1460,110],[1478,130],[1490,60],[1505,25],[1515,10],[1540,5]];
  var b = [[0,3],[30,5],[45,20],[60,5],[65,30],[85,12],[100,40],[112,20],[120,5],[135,12],[165,10],[175,5],[180,60],[190,65],[200,5],[230,5],[240,35],[255,10],[290,10],[305,5],[320,15],[340,20],[380,15],[395,20],[420,20],[460,10],[475,5],[480,30],[510,28],[570,28],[605,25],[615,3],[640,30],[660,45],[680,25],[730,25],[745,45],[770,10],[780,35],[790,5],[805,35],[820,40],[860,35],[930,35],[940,5],[955,60],[975,80],[1000,95],[1040,90],[1090,95],[1105,35],[1150,20],[1185,28],[1195,5],[1205,5],[1220,45],[1270,40],[1280,15],[1330,20],[1340,5],[1365,5],[1375,50],[1390,90],[1430,70],[1450,50],[1480,100],[1500,110],[1515,40],[1525,10],[1545,5]];
  var pts = [];
  a.forEach(function (p) { if (p[0] / 2.01 < 770) pts.push([p[0] / 2.01, p[1] / 3]); });
  b.forEach(function (p) { pts.push([770 + p[0] / 2.01, p[1] / 3]); });

  var spikes = [[71,59],[98,55],[398,38],[422,60],[442,35],[617,47],[669,60],[689,57],[735,80],[736,78],[864,26],[1098,30],[1257,67],[1263,48],[1288,45],[1299,45],[1514,67]];

  function envAt(x) {
    for (var i = 1; i < pts.length; i++) {
      if (x <= pts[i][0]) {
        var p = pts[i - 1], q = pts[i];
        return p[1] + (q[1] - p[1]) * (x - p[0]) / ((q[0] - p[0]) || 1);
      }
    }
    return 1;
  }

  var seed = 20190;
  function rnd() { seed = (seed * 16807) % 2147483647; return seed / 2147483647; }

  function channel(cy) {
    var blockLeft = 0, f = 1;
    for (var px = 0; px < 1536; px++) {
      var X = px + OX, e = envAt(X);
      if (blockLeft-- <= 0) { blockLeft = 1 + Math.floor(rnd() * 4); f = 0.7 + rnd() * 0.32; }
      var up = e * (0.95 + Math.pow(rnd(), 3) * 0.4), dn = e * (0.95 + Math.pow(rnd(), 3) * 0.4);
      spikes.forEach(function (s) {
        if (s[0] === X) { up = Math.max(up, s[1]); dn = Math.max(dn, s[1] * 1.03); }
      });
      g.fillStyle = '#0a8a12';
      g.fillRect(px, cy - up, 1, up + dn);
      var bu = Math.max(1.5, e * f * (0.9 + rnd() * 0.12)), bd = Math.max(1.5, e * f * (0.9 + rnd() * 0.12));
      g.fillStyle = '#00ff80';
      g.fillRect(px, cy - bu, 1, bu + bd);
    }
  }

  channel(247 - OY);
  channel(454 - OY);

  var BLUE = '#4258ff';
  g.strokeStyle = BLUE;
  g.lineWidth = 1;
  function line(x1, y1, x2, y2, dash) {
    g.setLineDash(dash ? [3, 3] : []);
    g.beginPath();
    g.moveTo(x1 - OX + 0.5, y1 - OY + 0.5);
    g.lineTo(x2 - OX + 0.5, y2 - OY + 0.5);
    g.stroke();
  }

  [222, 441, 660, 878, 1097, 1316, 1534].forEach(function (x) { line(x, 143, x, 558, true); });
  [195, 247, 298, 402, 454, 505].forEach(function (y) { line(55, y, 1539, y, true); });
  line(55, 143, 55, 558, false);
  [169, 221, 273, 324, 376, 428, 480, 531, 195, 298, 402, 505].forEach(function (y) { line(48, y, 55, y, false); });
  g.strokeStyle = '#2030c8';
  line(3, 351, 1539, 351, false);

  g.setLineDash([]);
  g.fillStyle = '#fff';
  g.fillRect(192 - OX, 0, 1, 415);
  g.fillStyle = '#ff2a80';
  g.fillRect(192 - OX, 225 - OY, 1, 44);
  g.fillRect(192 - OX, 432 - OY, 1, 44);
})();
```
